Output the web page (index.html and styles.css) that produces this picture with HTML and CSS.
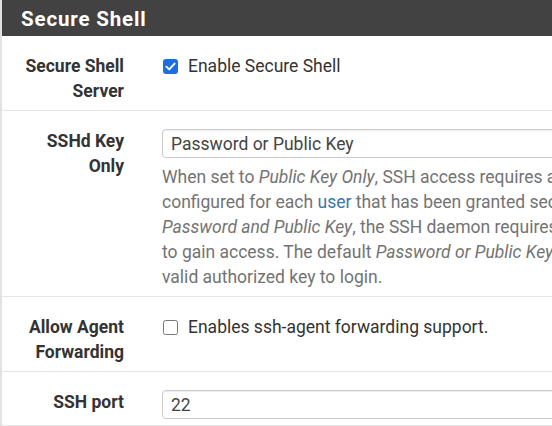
FILE: index.html
```html
<!DOCTYPE html>
<html>
<head>
<meta charset="utf-8">
<link rel="stylesheet" href="styles.css">
</head>
<body>
<div class="panel">
  <div class="panel-heading"><h2 class="panel-title">Secure Shell</h2></div>
  <div class="panel-body">
    <div class="form-row">
      <div class="label">Secure Shell<br>Server</div>
      <div class="content">
        <label class="check"><span class="box checked"><svg viewBox="0 0 16 16" width="15" height="15"><path d="M3.6 8.2 L6.6 11.1 L12.4 4.9" fill="none" stroke="#fff" stroke-width="2" stroke-linecap="round" stroke-linejoin="round"/></svg></span>Enable Secure Shell</label>
      </div>
    </div>
    <div class="form-row">
      <div class="label">SSHd Key<br>Only</div>
      <div class="content">
        <div class="control">Password or Public Key</div>
        <div class="help">When set to <i>Public Key Only</i>, SSH access requires authorized keys and these keys must be<br>configured for each <a href="#">user</a> that has been granted secure shell access. If set to <i>Require Both</i><br><i>Password and Public Key</i>, the SSH daemon requires both authorized keys and valid passwords<br>to gain access. The default <i>Password or Public Key</i> setting allows either a valid password or a<br>valid authorized key to login.</div>
      </div>
    </div>
    <div class="form-row">
      <div class="label">Allow Agent<br>Forwarding</div>
      <div class="content">
        <label class="check"><span class="box"></span>Enables ssh-agent forwarding support.</label>
      </div>
    </div>
    <div class="form-row">
      <div class="label">SSH port</div>
      <div class="content">
        <div class="control">22</div>
      </div>
    </div>
  </div>
</div>
</body>
</html>
```
FILE: styles.css
```css
html, body {
  margin: 0;
  padding: 0;
  overflow: hidden;
  background: #fff;
}
body {
  font-family: Roboto, "Liberation Sans", sans-serif;
  font-size: 17.5px;
  line-height: 25px;
  color: #333;
}
.panel {
  width: 552px;
  height: 426px;
  overflow: hidden;
  border-left: 2px solid #e2e2e2;
  box-sizing: border-box;
}
.panel-heading {
  background: #424242;
  height: 36px;
  padding: 2px 0 0 19px;
  box-sizing: border-box;
  display: flex;
  align-items: center;
}
.panel-title {
  margin: 0;
  color: #fff;
  font-size: 20.5px;
  font-weight: 700;
  letter-spacing: 0.85px;
  line-height: 34px;
  white-space: nowrap;
}
.form-row {
  display: grid;
  grid-template-columns: 122px 900px;
  column-gap: 38px;
  padding: 18px 0 6px 0;
  border-bottom: 1px solid #e6e6e6;
}
.label {
  text-align: right;
  font-weight: 700;
  color: #333;
}
.content {
  white-space: nowrap;
}
.check {
  display: flex;
  align-items: center;
  gap: 10px;
  margin-left: 1px;
}
.box {
  width: 15px;
  height: 15px;
  box-sizing: border-box;
  border: 1.5px solid #777;
  border-radius: 2.5px;
  display: inline-block;
  background: #fff;
}
.box.checked {
  border: none;
  background: #1d6fdf;
  border-radius: 3px;
}
.box svg {
  display: block;
}
.control {
  width: 700px;
  height: 29px;
  box-sizing: border-box;
  border: 1px solid #ccc;
  border-radius: 4px;
  box-shadow: inset 0 1px 1px rgba(0,0,0,0.075);
  padding-left: 8px;
  line-height: 28px;
  color: #444;
  margin-top: -0.5px;
}
.help {
  margin-top: 7.5px;
  color: #737373;
}
.help a {
  color: #3b76a8;
  text-decoration: none;
}
```
